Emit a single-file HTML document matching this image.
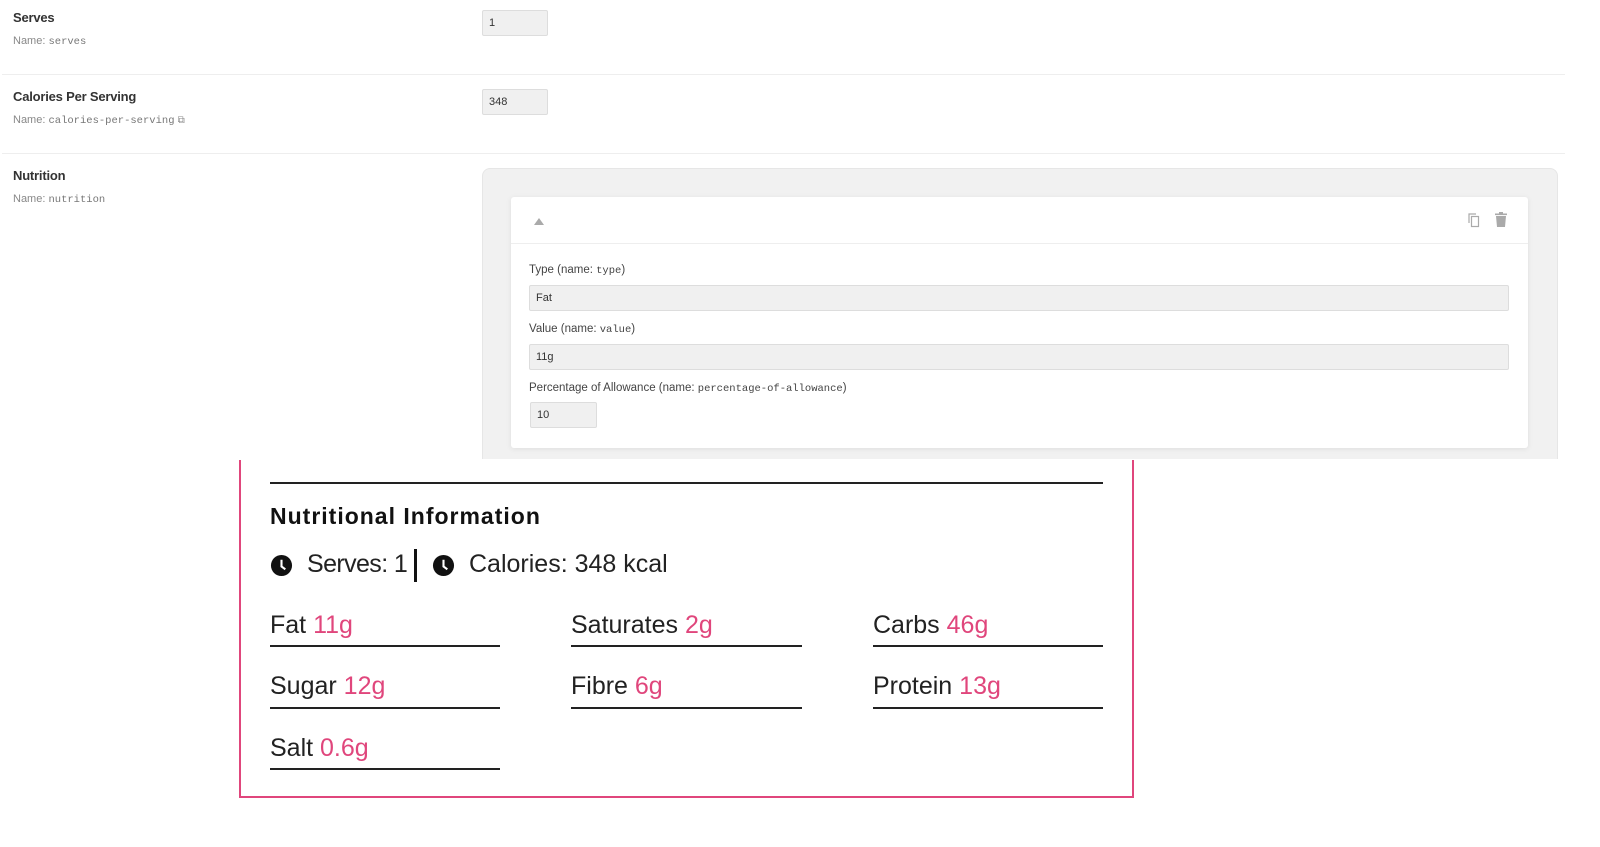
<!DOCTYPE html>
<html><head><style>
*{margin:0;padding:0;box-sizing:border-box}
body{width:1600px;height:847px;background:#fff;font-family:"Liberation Sans",sans-serif;position:relative;overflow:hidden;color:#333}
.abs{position:absolute}
.lbl{font-size:13px;color:#333;font-weight:bold;letter-spacing:-0.2px}
.nm{font-size:11px;color:#888}
.nm code{font-family:"Liberation Mono",monospace;font-size:10.5px;color:#777}
.inp{background:#f0f0f0;border:1px solid #ddd;border-radius:2px;font-size:11px;color:#333;padding-left:6px;line-height:24px;height:26px}
.sep{height:1px;background:#eee;left:2px;width:1563px}
.flbl{font-size:11.5px;color:#444}
.flbl code{font-family:"Liberation Mono",monospace;font-size:10.5px}
.big{font-size:25px;color:#222}
.big span{color:#e0467c}
.ul{height:1.5px;background:#222}
</style></head><body>
<div class="abs lbl" style="left:13px;top:10px">Serves</div>
<div class="abs nm" style="left:13px;top:35px">Name: <code>serves</code></div>
<div class="abs inp" style="left:482px;top:10px;width:66px">1</div>
<div class="abs sep" style="top:74px"></div>
<div class="abs lbl" style="left:13px;top:89px">Calories Per Serving</div>
<div class="abs nm" style="left:13px;top:114px">Name: <code>calories-per-serving</code> <span style="font-size:10px">⧉</span></div>
<div class="abs inp" style="left:482px;top:89px;width:66px">348</div>
<div class="abs sep" style="top:153px"></div>
<div class="abs lbl" style="left:13px;top:168px">Nutrition</div>
<div class="abs nm" style="left:13px;top:193px">Name: <code>nutrition</code></div>

<div class="abs" style="left:482px;top:168px;width:1076px;height:291px;background:#f1f1f1;border:1px solid #e6e6e6;border-bottom:none;border-radius:8px 8px 0 0"></div>
<div class="abs" style="left:511px;top:197px;width:1017px;height:251px;background:#fff;border-radius:3px;box-shadow:0 1px 6px rgba(0,0,0,0.08)">
  <div class="abs" style="left:23px;top:21px;width:0;height:0;border-left:5px solid transparent;border-right:5px solid transparent;border-bottom:7px solid #aaa"></div>
  <svg class="abs" style="left:955px;top:15px" width="16" height="16" viewBox="0 0 16 16"><path d="M3 11V2h7" fill="none" stroke="#aaa" stroke-width="1.2"/><rect x="5.5" y="4.5" width="7" height="10" fill="none" stroke="#aaa" stroke-width="1.2"/></svg>
  <svg class="abs" style="left:983px;top:15px" width="14" height="16" viewBox="0 0 14 16"><rect x="1" y="1.5" width="12" height="1.6" fill="#aaa"/><rect x="5" y="0" width="4" height="2" fill="#aaa"/><path d="M2 4h10l-1 11H3z" fill="#aaa"/></svg>
  <div class="abs" style="left:0;top:46px;width:100%;height:1px;background:#eee"></div>
  <div class="abs flbl" style="left:18px;top:67px">Type (name: <code>type</code>)</div>
  <div class="abs inp" style="left:18px;top:88px;width:980px">Fat</div>
  <div class="abs flbl" style="left:18px;top:126px">Value (name: <code>value</code>)</div>
  <div class="abs inp" style="left:18px;top:147px;width:980px">11g</div>
  <div class="abs flbl" style="left:18px;top:185px">Percentage of Allowance (name: <code>percentage-of-allowance</code>)</div>
  <div class="abs inp" style="left:19px;top:205px;width:67px">10</div>
</div>

<div class="abs" style="left:239px;top:460px;width:895px;height:338px;border:2px solid #e0467c;border-top:none"></div>
<div class="abs" style="left:270px;top:482px;width:833px;height:1.5px;background:#222"></div>
<div class="abs" style="left:270px;top:503px;font-size:23px;font-weight:bold;color:#111;letter-spacing:1px">Nutritional Information</div>
<svg class="abs" style="left:270px;top:554px" width="23" height="23" viewBox="0 0 24 24"><circle cx="12" cy="12" r="11" fill="#111"/><path d="M12 6v7l4 3" stroke="#fff" stroke-width="2.2" fill="none"/></svg>
<div class="abs big" style="left:307px;top:550px;letter-spacing:-0.6px">Serves: 1</div>
<div class="abs" style="left:414px;top:549px;width:3px;height:33px;background:#111"></div>
<svg class="abs" style="left:432px;top:554px" width="23" height="23" viewBox="0 0 24 24"><circle cx="12" cy="12" r="11" fill="#111"/><path d="M12 6v7l4 3" stroke="#fff" stroke-width="2.2" fill="none"/></svg>
<div class="abs big" style="left:469px;top:550px">Calories: 348 kcal</div>

<div class="abs big" style="left:270px;top:611px">Fat <span>11g</span></div>
<div class="abs ul" style="left:270px;top:645px;width:230px"></div>
<div class="abs big" style="left:571px;top:611px">Saturates <span>2g</span></div>
<div class="abs ul" style="left:571px;top:645px;width:231px"></div>
<div class="abs big" style="left:873px;top:611px">Carbs <span>46g</span></div>
<div class="abs ul" style="left:873px;top:645px;width:230px"></div>

<div class="abs big" style="left:270px;top:672px">Sugar <span>12g</span></div>
<div class="abs ul" style="left:270px;top:707px;width:230px"></div>
<div class="abs big" style="left:571px;top:672px">Fibre <span>6g</span></div>
<div class="abs ul" style="left:571px;top:707px;width:231px"></div>
<div class="abs big" style="left:873px;top:672px">Protein <span>13g</span></div>
<div class="abs ul" style="left:873px;top:707px;width:230px"></div>

<div class="abs big" style="left:270px;top:734px">Salt <span>0.6g</span></div>
<div class="abs ul" style="left:270px;top:768px;width:230px"></div>
</body></html>
